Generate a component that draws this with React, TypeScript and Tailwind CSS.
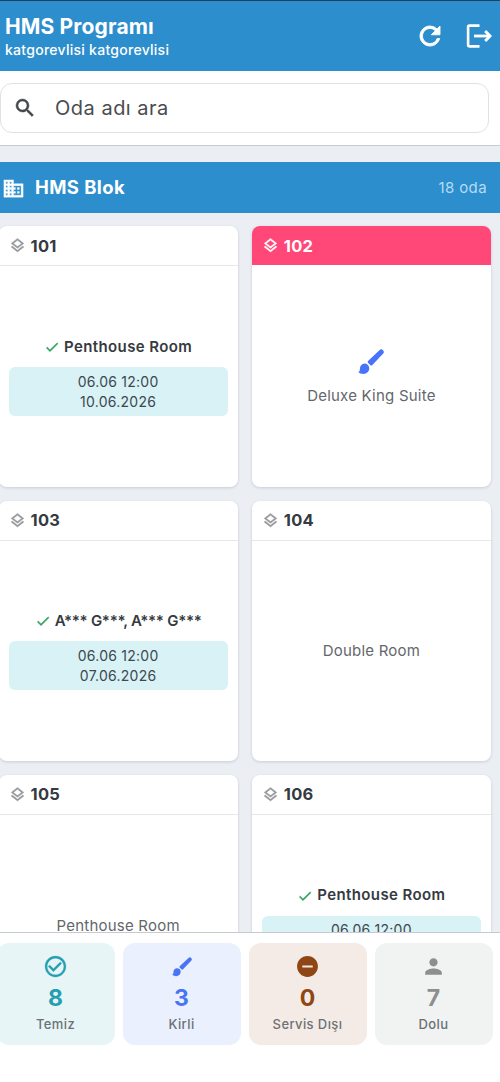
/**
 * Room Status Screen - Housekeeping Overview
 *
 * Lists the rooms of a block with their current state and
 * shows a summary of room counts in the bottom bar.
 */

import type { ReactNode } from 'react'
import {
  MdBusiness,
  MdCheck,
  MdCheckCircleOutline,
  MdOutlineLayers,
  MdPerson,
  MdRefresh,
  MdRemoveCircle,
  MdSearch,
} from 'react-icons/md'

type Room = {
  no: string
  label: string
  dates?: [string, string]
  dirty?: boolean
  masked?: boolean
}

const BrushIcon = ({ className }: { className?: string }) => (
  <svg width="1em" height="1em" viewBox="0 0 26 26" fill="currentColor" className={className}>
    <path d="M21.4 1.2a2.6 2.6 0 0 1 3.6 0a2.6 2.6 0 0 1 0 3.6L14.4 16Q13.3 17 12.2 16L10.2 14Q9.2 12.8 10.3 11.8Z" />
    <path d="M6.6 14.6A4.8 4.8 0 0 1 11.3 19.3C11.3 22.7 8.6 24.9 5.4 24.9C3.2 24.9 1.3 24.1 0.2 22.9C1.5 22.6 1.9 21.6 1.9 19.9A4.9 4.9 0 0 1 6.6 14.6Z" />
  </svg>
)

const LogoutIcon = () => (
  <svg width="26" height="26" viewBox="0 0 26 26" fill="none" stroke="currentColor" strokeWidth="2.6">
    <path d="M13.5 2.6H3.2Q2.1 2.6 2.1 3.7V22.3Q2.1 23.4 3.2 23.4H13.5" />
    <path d="M8 13H22" strokeWidth="2.8" />
    <path d="M19.2 8L24 13L19.2 18" strokeWidth="3" />
  </svg>
)

const rooms: Room[] = [
  { no: '101', label: 'Penthouse Room', dates: ['06.06 12:00', '10.06.2026'] },
  { no: '102', label: 'Deluxe King Suite', dirty: true },
  { no: '103', label: 'A*** G***, A*** G***', dates: ['06.06 12:00', '07.06.2026'], masked: true },
  { no: '104', label: 'Double Room' },
  { no: '105', label: 'Penthouse Room' },
  { no: '106', label: 'Penthouse Room', dates: ['06.06 12:00', '10.06.2026'] },
]

const stats: { label: string; count: number; box: string; color: string; icon: ReactNode }[] = [
  {
    label: 'Temiz',
    count: 8,
    box: 'bg-[#e8f5f6]',
    color: 'text-[#239fb0]',
    icon: <MdCheckCircleOutline className="stroke-current stroke-[0.3] [&>[fill=none]]:stroke-none" />,
  },
  { label: 'Kirli', count: 3, box: 'bg-[#eaf0fd]', color: 'text-[#4b74f2]', icon: <BrushIcon className="my-[2.5px] size-5" /> },
  { label: 'Servis Dışı', count: 0, box: 'bg-[#f4ebe6]', color: 'text-[#8f4614]', icon: <MdRemoveCircle /> },
  { label: 'Dolu', count: 7, box: 'bg-[#f1f3f3]', color: 'text-[#8d8f8f]', icon: <MdPerson /> },
]

const RoomCard = ({ room }: { room: Room }) => (
  <div className="flex h-[260.3px] flex-col overflow-hidden rounded-lg bg-white shadow-[0_1px_3px_rgba(60,70,90,0.2)]">
    <div
      className={
        room.dirty
          ? 'flex h-[39px] shrink-0 items-center gap-[5px] bg-[#ff4778] pl-[10px] text-white'
          : 'flex h-10 shrink-0 items-center gap-[5px] border-b border-[#e5e8eb] pl-[10px] text-[#353a40]'
      }
    >
      <MdOutlineLayers
        className={
          room.dirty
            ? 'size-[17px] stroke-current stroke-[0.6] [&>[fill=none]]:stroke-none'
            : 'size-[17px] stroke-current stroke-[0.6] text-[#959799] [&>[fill=none]]:stroke-none'
        }
      />
      <span className="text-[16.5px] font-bold tracking-[0.3px]">{room.no}</span>
    </div>

    <div className="flex flex-1 flex-col items-center justify-center px-[10px]">
      {room.dirty && <BrushIcon className="mt-[3px] mb-[10px] size-[26px] text-[#4774fa]" />}
      {room.dates ? (
        <>
          <div className="flex h-5 items-center gap-1 text-[15px] font-semibold tracking-[0.4px] text-[#353a40]">
            <MdCheck className="size-4 stroke-current stroke-[0.6] text-[#34a360] [&>[fill=none]]:stroke-none" />
            <span className={room.masked ? 'tracking-[-0.28px]' : ''}>{room.label}</span>
          </div>
          <div className="mt-[10px] flex h-[49px] w-full flex-col items-center justify-center rounded-md bg-[#d8f2f6] text-sm leading-5 tracking-[0.25px] text-[#3d484f]">
            <span>{room.dates[0]}</span>
            <span>{room.dates[1]}</span>
          </div>
        </>
      ) : (
        <span className="mt-px text-[15px] leading-5 tracking-[0.22px] text-[#63676c]">{room.label}</span>
      )}
    </div>
  </div>
)

const App = () => {
  return (
    <div className="flex h-[1082px] w-[500px] flex-col overflow-hidden bg-[#ebeff4] font-['Inter',sans-serif]">
      {/* App bar */}
      <header className="flex h-[71px] shrink-0 items-center justify-between border-t border-[#1d435c] bg-[#2c8ecd] pr-2 pl-[5px] text-white">
        <div className="pt-[2px]">
          <h1 className="text-[21px] leading-[26px] font-bold tracking-[0.15px]">HMS Programı</h1>
          <p className="text-sm leading-5 font-medium tracking-[0.27px]">katgorevlisi katgorevlisi</p>
        </div>
        <div className="flex items-center gap-[21px]">
          <MdRefresh className="size-[30px] stroke-current stroke-[0.7] [&>[fill=none]]:stroke-none" />
          <LogoutIcon />
        </div>
      </header>

      {/* Search */}
      <div className="h-[75px] shrink-0 border-b border-[#c6cbd3] bg-white pt-3">
        <div className="flex h-[50px] w-[489px] items-center gap-[18px] rounded-xl border border-[#dfe1e8] pl-3">
          <MdSearch className="size-6 stroke-current stroke-[0.5] text-[#44474a] [&>[fill=none]]:stroke-none" />
          <span className="text-xl tracking-[0.5px] text-[#494c50]">Oda adı ara</span>
        </div>
      </div>

      {/* Block header */}
      <div className="mt-4 flex h-[51px] shrink-0 items-center bg-[#2c8ecd] pt-px pr-[13px] pl-[2px] text-white">
        <MdBusiness className="size-[23px] stroke-current stroke-[0.4] [&>[fill=none]]:stroke-none" />
        <h2 className="ml-[10px] text-[18.5px] font-bold tracking-[0.4px]">HMS Blok</h2>
        <span className="ml-auto text-[15px] tracking-[0.4px] text-[#b4dbf2]">18 oda</span>
      </div>

      {/* Rooms */}
      <main className="-ml-[1.5px] min-h-0 flex-1 overflow-hidden pt-[13.4px]">
        <div className="grid w-[492.5px] grid-cols-2 gap-[14px]">
          {rooms.map((room) => (
            <RoomCard key={room.no} room={room} />
          ))}
        </div>
      </main>

      {/* Summary bar */}
      <footer className="h-[150px] shrink-0 border-t border-[#c6c9d0] bg-white pt-[10px]">
        <div className="-ml-[3.5px] grid w-[496px] grid-cols-4 gap-2">
          {stats.map((stat) => (
            <div key={stat.label} className={`flex h-[102px] flex-col items-center rounded-xl pt-[11px] ${stat.box}`}>
              <div className={`text-[25px] ${stat.color}`}>{stat.icon}</div>
              <div className={`mt-[5px] text-[23px] leading-[28px] font-bold ${stat.color}`}>{stat.count}</div>
              <div className="mt-[3px] text-[13px] leading-[18px] font-medium tracking-[0.4px] text-[#6b7174]">
                {stat.label}
              </div>
            </div>
          ))}
        </div>
      </footer>
    </div>
  )
}

export default App
